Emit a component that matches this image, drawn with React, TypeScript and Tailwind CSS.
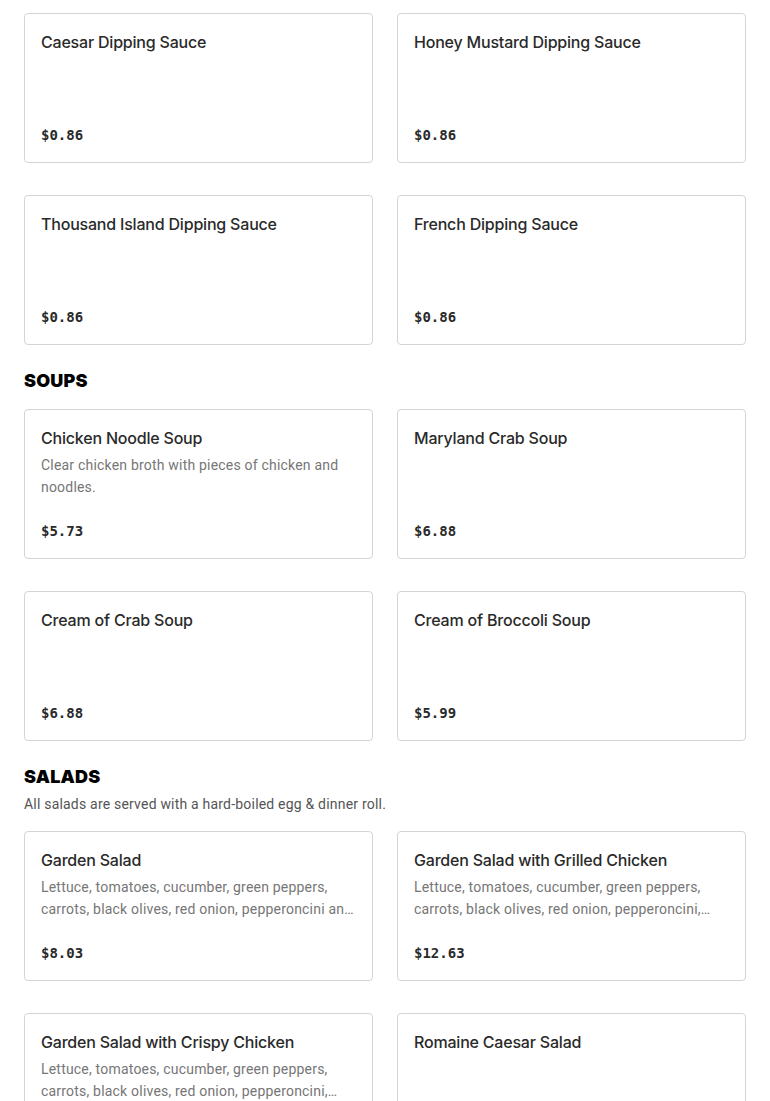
import React from 'react';

interface MenuItem {
  name: string;
  description?: string;
  price: string;
}

interface Section {
  title?: string;
  note?: string;
  items: MenuItem[];
}

const SALAD_BASE = 'Lettuce, tomatoes, cucumber, green peppers, carrots, black olives, red onion, pepperoncini';

const SECTIONS: Section[] = [
  {
    items: [
      { name: 'Caesar Dipping Sauce', price: '$0.86' },
      { name: 'Honey Mustard Dipping Sauce', price: '$0.86' },
      { name: 'Thousand Island Dipping Sauce', price: '$0.86' },
      { name: 'French Dipping Sauce', price: '$0.86' },
    ],
  },
  {
    title: 'SOUPS',
    items: [
      { name: 'Chicken Noodle Soup', description: 'Clear chicken broth with pieces of chicken and noodles.', price: '$5.73' },
      { name: 'Maryland Crab Soup', price: '$6.88' },
      { name: 'Cream of Crab Soup', price: '$6.88' },
      { name: 'Cream of Broccoli Soup', price: '$5.99' },
    ],
  },
  {
    title: 'SALADS',
    note: 'All salads are served with a hard-boiled egg & dinner roll.',
    items: [
      { name: 'Garden Salad', description: `${SALAD_BASE} and croutons.`, price: '$8.03' },
      { name: 'Garden Salad with Grilled Chicken', description: `${SALAD_BASE}, croutons and grilled chicken.`, price: '$12.63' },
      { name: 'Garden Salad with Crispy Chicken', description: `${SALAD_BASE}, croutons and crispy chicken.`, price: '$12.63' },
      { name: 'Romaine Caesar Salad', price: '$8.61' },
    ],
  },
];

const Card: React.FC<{ item: MenuItem }> = ({ item }) => (
  <div className="h-[150px] flex flex-col rounded border border-[#d4d4d4] bg-white px-4 pt-4 pb-[15px]">
    <h3 className="text-[16px] leading-6 font-medium text-[#2a2a2a] font-['Inter',sans-serif] tracking-[-0.2px]">
      {item.name}
    </h3>
    {item.description && (
      <p className="mt-1 text-[14px] leading-[22px] tracking-[0.2px] text-[#767676] font-['Roboto',sans-serif] line-clamp-2">
        {item.description}
      </p>
    )}
    <p className="mt-auto text-[14px] leading-6 font-bold text-[#2a2a2a] font-['DejaVu_Sans_Mono',monospace]">
      {item.price}
    </p>
  </div>
);

export default function App() {
  return (
    <div className="min-h-screen bg-white px-6 pt-[13px] pb-10">
      {SECTIONS.map((section, i) => (
        <section key={i} className={i > 0 ? 'mt-6' : ''}>
          {section.title && (
            <h2 className="text-[18px] leading-6 font-black text-black font-['Inter',sans-serif] tracking-[0.2px]">
              {section.title}
            </h2>
          )}
          {section.note && (
            <p className="mt-[5px] text-[14px] leading-5 tracking-[0.2px] text-[#555] font-['Roboto',sans-serif]">
              {section.note}
            </p>
          )}
          <div className={`grid grid-cols-2 gap-x-6 gap-y-8 ${section.title ? (section.note ? 'mt-[17px]' : 'mt-4') : ''}`}>
            {section.items.map((item) => (
              <Card key={item.name} item={item} />
            ))}
          </div>
        </section>
      ))}
    </div>
  );
}
